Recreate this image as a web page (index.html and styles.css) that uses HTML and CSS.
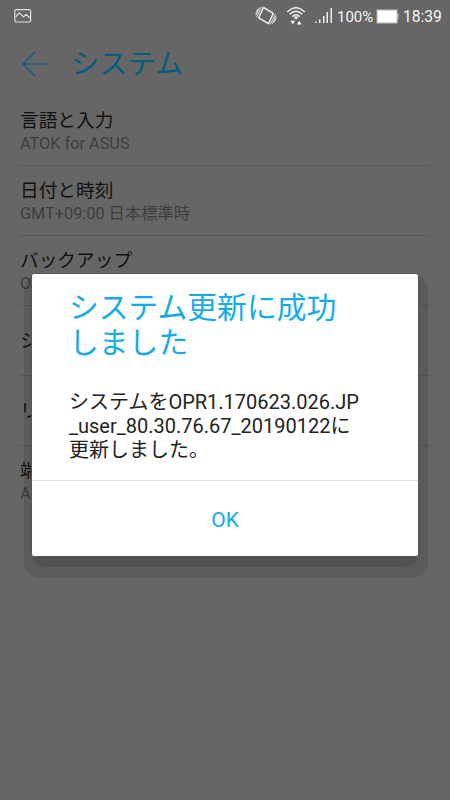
FILE: index.html
```html
<!DOCTYPE html>
<html lang="ja">
<head>
<meta charset="utf-8">
<title>システム</title>
<link rel="stylesheet" href="styles.css">
</head>
<body>
<div class="screen">
  <div class="status">
    <svg class="picture" width="18" height="14" viewBox="0 0 18 14" fill="none" stroke="#ddd" stroke-width="1.2"><rect x=".8" y=".6" width="15.8" height="12.400" rx="1.2"/><path d="M1.500 8 5.300 3.800 9.600 8 12 5.300 16 9"/></svg>
    <svg class="rotate" width="22" height="22" viewBox="0 0 22 22" fill="none" stroke="#eee" stroke-width=".9"><path d="M8.500 2.500 18.300 8.300 13.500 18.700 3.700 12.800Z" stroke-width="1.500" stroke-linejoin="round"/><path d="M6.600 1.800 1.700 12.200M4.600 2.500 .9 10.400M2.900 4 .7 8.600M15.400 19.500 20.300 9.100M17.400 18.700 21.100 10.800M19.100 17.200 21.300 12.600"/></svg>
    <svg class="wifi" width="20" height="20" viewBox="0 0 20 20" fill="none" stroke="#eee" stroke-width="1.400"><path d="M1.300 6Q10-2.700 18.700 6M3.700 8.300Q10 2 16.300 8.300M6.200 10.500Q10 6.800 13.800 10.500"/><path d="M7.500 10.500H12.500L10 13.700ZM4.500 14.800H9L6.800 18.500ZM11 18.500H15.500L13.200 14.800Z" fill="#fff" stroke="none"/></svg>
    <svg class="signal" width="18" height="16" viewBox="0 0 18 16" fill="#eee"><path d="M0 13.500h1.500V15H0zM4 11.500h1.500V15H4zM8 8h1.500v7H8zM11.500 4H13v11h-1.500zM15.500 0H17v15h-1.500z"/></svg>
    <span class="percent">100%</span>
    <svg class="battery" width="23" height="15" viewBox="0 0 23 15"><path d="M.5.500h21v4h1v6h-1v4H.5z" fill="#bbb"/><path d="M1.500 1.500h19v12h-19z" fill="#fff"/></svg>
    <span class="clock">18:39</span>
  </div>
  <header>
    <svg width="26" height="26" viewBox="0 0 26 26" fill="none" stroke="#075d7c" stroke-width="1.200"><path d="M25.500 13H1M13 1 1 13 13 25"/></svg>
    <h1>システム</h1>
  </header>
  <ul class="list">
    <li><b>言語と入力</b><span>ATOK for ASUS</span></li>
    <li><b>日付と時刻</b><span>GMT+09:00 日本標準時</span></li>
    <li><b>バックアップ</b><span>O</span></li>
    <li class="single"><b>シ</b></li>
    <li class="single"><b>リ</b></li>
    <li><b>端</b><span>A</span></li>
  </ul>
  <div class="shadow"></div>
  <div class="shadow-inner"></div>
  <section class="dialog" role="dialog">
    <div class="content">
      <h2>システム更新に成功<br>しました</h2>
      <p>システムをOPR1.170623.026.JP<br>_user_80.30.76.67_20190122に<br>更新しました。</p>
    </div>
    <button>OK</button>
  </section>
</div>
</body>
</html>
```

FILE: styles.css
```css
* { box-sizing: border-box; }
body { margin: 0; font-family: Roboto, "Noto Sans CJK JP", sans-serif; }
.screen { position: relative; width: 450px; height: 800px; overflow: hidden; background: #666; }
.status { display: flex; align-items: center; height: 32px; padding: 0 8px 0 14px; color: #f5f5f5; font-size: 15.6px; }
.status svg { flex: none; }
.rotate { margin-left: 223px; }
.wifi { margin-left: 9px; }
.signal { margin-left: 9px; }
.percent { flex: none; margin-left: 4px; width: 38px; white-space: nowrap; font-size: 15px; }
.battery { margin-left: 1px; }
.clock { margin-left: 4px; }
.percent, .clock { padding-top: 1px; }
header { display: flex; align-items: center; height: 63px; padding-left: 22px; }
h1 { margin: 2px 0 0 23px; color: #075d7c; font-size: 28.3px; font-weight: 400; line-height: 40px; }
.list { list-style: none; margin: 1px 20px 0; padding: 0; }
.list li { height: 70px; padding-top: 11px; border-bottom: 1px solid #595959; white-space: nowrap; }
.list li:last-child { border: 0; }
.list b { display: block; color: #111; font-size: 18.7px; font-weight: 400; line-height: 28px; }
.list span { display: block; color: #3e3e3e; font-size: 16.3px; line-height: 20px; margin-top: -1px; }
.list .single { padding-top: 21px; }
.shadow { position: absolute; left: 24px; top: 274px; width: 404px; height: 304px; border-radius: 16px; background: rgba(0, 0, 0, .1); }
.shadow-inner { position: absolute; left: 33px; top: 284px; width: 385px; height: 283px; border-radius: 12px; background: rgba(0, 0, 0, .1); }
.dialog { position: absolute; left: 31px; top: 273px; width: 388px; height: 283.500px; border: .5px solid #555; border-radius: 3px; background: #fff; overflow: hidden; }
.content { height: 207px; padding: 16px 0 0 37px; border-bottom: 1px solid #ddd; }
h2 { margin: 0; color: #15abe6; font-size: 29.800px; font-weight: 400; line-height: 35px; white-space: nowrap; }
p { margin: 30px 0 0; color: #222; font-size: 20px; line-height: 24px; white-space: nowrap; }
button { display: block; width: 100%; height: 78px; padding: 0; border: 0; background: none; color: #15abe6; font: 21px Roboto, sans-serif; }
```
